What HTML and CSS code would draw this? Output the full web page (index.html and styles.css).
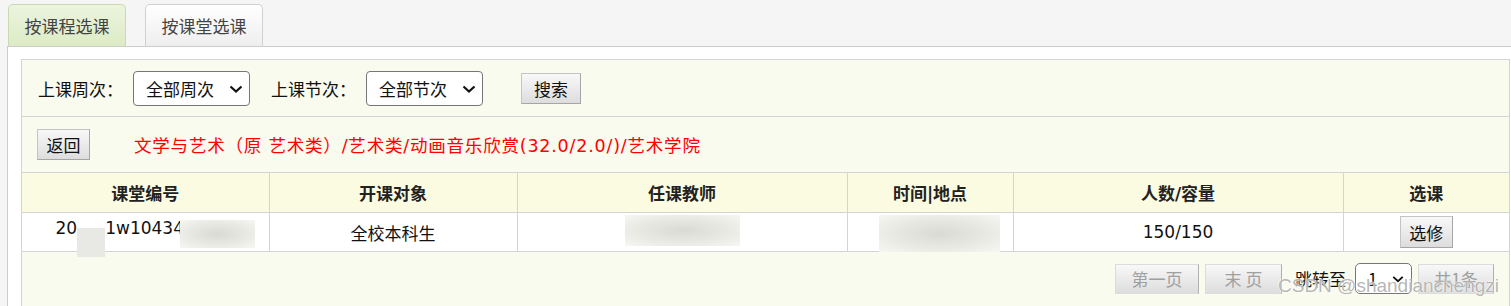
FILE: index.html
```html
<!DOCTYPE html>
<html lang="zh-CN">

<head>
    <meta charset="UTF-8">
    <meta name="viewport" content="width=device-width, initial-scale=1.0">
    <title>选课</title>
    <link rel="stylesheet" href="styles.css">
</head>

<body>
    <div class="tabs">
        <a class="tab active">按课程选课</a>
        <a class="tab">按课堂选课</a>
    </div>

    <div class="panel">
        <div class="box">
            <!-- 查询条件 -->
            <div class="filter">
                <label>上课周次：</label>
                <span class="selwrap">
                    <select class="sel"><option>全部周次</option></select>
                    <svg class="arrow" viewBox="0 0 14 8"><path d="M1.5 1.5 L7 6.5 L12.5 1.5" /></svg>
                </span>
                <label class="lbl2">上课节次：</label>
                <span class="selwrap">
                    <select class="sel"><option>全部节次</option></select>
                    <svg class="arrow" viewBox="0 0 14 8"><path d="M1.5 1.5 L7 6.5 L12.5 1.5" /></svg>
                </span>
                <button class="btn search">搜索</button>
            </div>

            <div class="crumb">
                <button class="btn back">返回</button>
                <span class="path">文学与艺术（原 艺术类）/艺术类/动画音乐欣赏(32.0/2.0/)/艺术学院</span>
            </div>

            <table class="grid">
                <colgroup>
                    <col class="w1"><col class="w2"><col class="w3"><col class="w4"><col class="w5"><col class="w6">
                </colgroup>
                <thead>
                    <tr>
                        <th>课堂编号</th>
                        <th>开课对象</th>
                        <th>任课教师</th>
                        <th>时间|地点</th>
                        <th>人数/容量</th>
                        <th>选课</th>
                    </tr>
                </thead>
                <tbody>
                    <tr>
                        <td class="code">20<span class="blur b1"></span>1w10434<span class="blur b2"></span></td>
                        <td>全校本科生</td>
                        <td><span class="blur b3"></span></td>
                        <td><span class="blur b4"></span></td>
                        <td>150/150</td>
                        <td><button class="btn pick">选修</button></td>
                    </tr>
                </tbody>
            </table>

            <div class="pager">
                <button class="btn pg first" disabled>第一页</button>
                <button class="btn pg last" disabled>末 页</button>
                <span class="jump">跳转至</span>
                <span class="selwrap small">
                    <select class="sel"><option>1</option></select>
                    <svg class="arrow" viewBox="0 0 14 8"><path d="M1.5 1.5 L7 6.5 L12.5 1.5" /></svg>
                </span>
                <button class="btn pg total" disabled>共1条</button>
            </div>
        </div>
    </div>

    <div class="watermark">CSDN @shandianchengzi</div>
</body>

</html>
```

FILE: styles.css
```css
body {
    margin: 0;
    height: 306px;
    overflow: hidden;
    background-color: #f5f5f5;
    font-family: "DejaVu Sans", "Noto Sans CJK SC", sans-serif;
    font-size: 17px;
    color: #111;
}

.tabs {
    display: flex;
    gap: 19px;
    height: 46px;
    padding-left: 8px;
    box-sizing: border-box;
    padding-top: 4px;
}

.tab {
    width: 118px;
    height: 42px;
    box-sizing: border-box;
    border: 1px solid #d0d0d0;
    border-bottom: none;
    border-radius: 5px 5px 0 0;
    background: linear-gradient(#ffffff, #eeeeee);
    font-family: "Noto Sans CJK SC", sans-serif;
    font-size: 17px;
    color: #444;
    display: flex;
    align-items: center;
    justify-content: center;
}

.tab.active {
    border-color: #c9dab0;
    background: linear-gradient(#ecf4de, #dcebc5);
}

.panel {
    margin-left: 7px;
    border-top: 1px solid #cccccc;
    border-left: 1px solid #cccccc;
    background: white;
    padding: 12px 0 0 13px;
    height: 260px;
}

.box {
    width: 1489px;
    box-sizing: border-box;
    height: 250px;
    border: 1px solid #d4d4d4;
    border-bottom: none;
    background: #f9fbee;
}

.filter {
    display: flex;
    align-items: center;
    height: 56px;
    padding-left: 16px;
    border-bottom: 1px solid #d4d4d4;
    font-family: "Noto Sans CJK SC", sans-serif;
}

.filter label {
    margin-right: 10px;
}

.filter .lbl2 {
    margin-left: 21px;
}

.selwrap {
    position: relative;
    display: inline-block;
    height: 35px;
}

.sel {
    appearance: none;
    width: 117px;
    height: 35px;
    padding-left: 12px;
    font-family: "Noto Sans CJK SC", sans-serif;
    font-size: 17px;
    color: #111;
    background: white;
    border: 1px solid #767676;
    border-radius: 4px;
}

.arrow {
    position: absolute;
    right: 7px;
    top: 14px;
    width: 14px;
    height: 8px;
    pointer-events: none;
}

.arrow path {
    fill: none;
    stroke: #111;
    stroke-width: 2.2;
}

.btn {
    font-family: "Noto Sans CJK SC", sans-serif;
    font-size: 17px;
    color: #111;
    background: linear-gradient(#f8f8f8, #dddddd);
    border: 1px solid #c4c4c4;
    border-right-color: #a6a6a6;
    border-bottom-color: #a6a6a6;
    padding: 0;
    cursor: pointer;
}

.search {
    width: 60px;
    height: 31px;
    margin-left: 38px;
}

.crumb {
    display: flex;
    align-items: center;
    height: 55px;
    padding-left: 15px;
    border-bottom: 1px solid #d4d4d4;
}

.back {
    width: 53px;
    height: 31px;
}

.path {
    margin-left: 44px;
    color: #ff0000;
    font-size: 17.5px;
    letter-spacing: 0.8px;
}

.grid {
    width: 100%;
    border-collapse: collapse;
    table-layout: fixed;
}

.w1 { width: 247px; }
.w2 { width: 248px; }
.w3, .w5 { width: 330px; }
.w4, .w6 { width: 166px; }

.grid th,
.grid td {
    border-left: 1px solid #d4d4d4;
    border-bottom: 1px solid #d4d4d4;
    text-align: center;
    padding: 0;
}

.grid th:first-child,
.grid td:first-child {
    border-left: none;
}

.grid th {
    height: 39px;
    background: #fbfbe1;
    font-weight: bold;
    color: #222;
}

.grid td {
    height: 38px;
    background: white;
    position: relative;
}

.code {
    padding-left: 20px !important;
}

.blur {
    display: inline-block;
    vertical-align: top;
    background: radial-gradient(ellipse at center, #dadad4 0%, #e9e9e4 55%, #f6f6f2 100%);
}

.b1 {
    width: 28px;
    height: 29px;
    position: relative;
    top: 10px;
    background: #e8e8e5;
}

.b2 {
    width: 75px;
    height: 28px;
    margin-left: -4px;
    position: relative;
    top: 2px;
}

.b3 {
    position: absolute;
    left: 107px;
    top: 2px;
    width: 115px;
    height: 31px;
}

.b4 {
    position: absolute;
    left: 31px;
    top: 2px;
    width: 121px;
    height: 37px;
}

.pick {
    width: 53px;
    height: 32px;
}

.pager {
    display: flex;
    justify-content: flex-end;
    align-items: center;
    padding: 11px 15px 0 0;
    font-family: "Noto Sans CJK SC", sans-serif;
}

.pg {
    height: 30px;
    color: #a0a0a0;
    border-color: #dcdcdc;
    border-right-color: #b0b0b0;
    cursor: default;
}

.first { width: 84px; }
.last { width: 77px; margin-left: 6px; }
.total { width: 76px; margin-left: 6px; }

.jump {
    margin-left: 13px;
}

.selwrap.small {
    height: 31px;
    margin-left: 9px;
}

.selwrap.small .sel {
    width: 57px;
    height: 31px;
    padding-left: 12px;
    border-radius: 5px;
}

.selwrap.small .arrow {
    top: 12px;
    right: 8px;
    width: 12px;
}

.watermark {
    position: absolute;
    left: 1278px;
    top: 275px;
    font-family: "Liberation Sans", sans-serif;
    font-size: 19px;
    color: rgba(120, 120, 120, 0.55);
    text-shadow: 0 0 2px #fff, 0 0 1px #fff;
    pointer-events: none;
}
```
